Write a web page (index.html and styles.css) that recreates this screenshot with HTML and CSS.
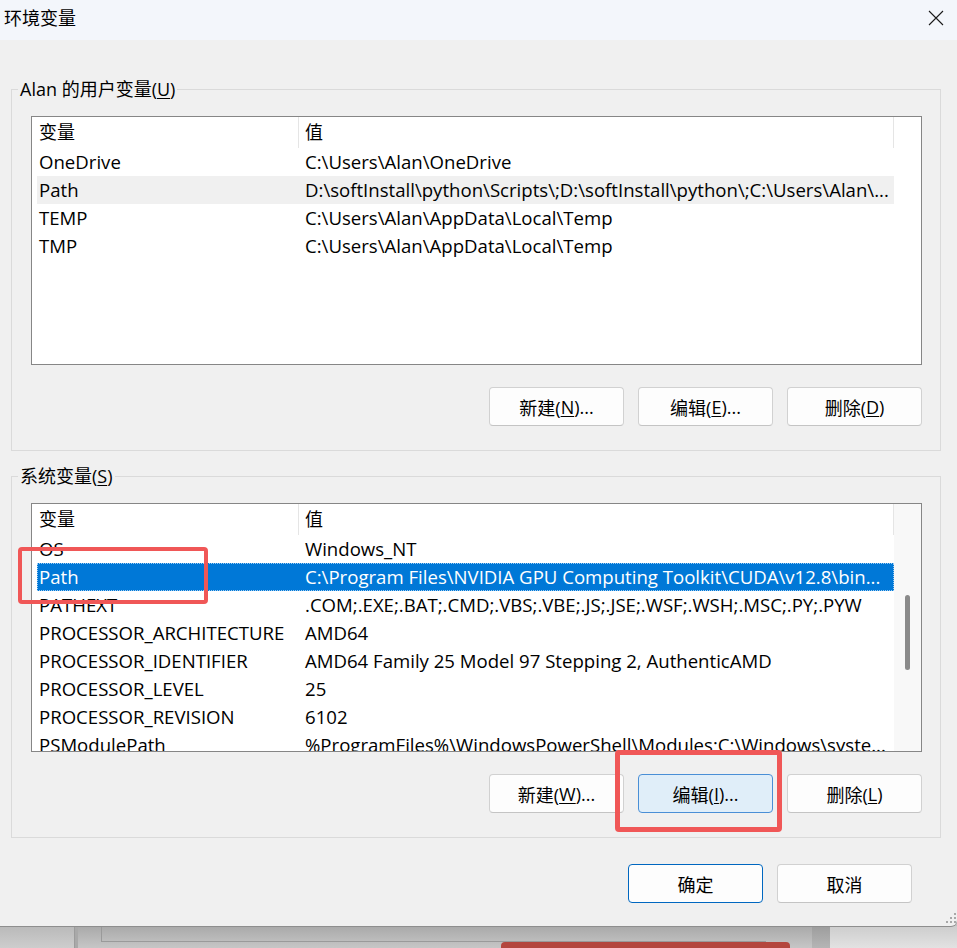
FILE: index.html
```html
<!DOCTYPE html>
<html lang="zh-CN">
<head>
<meta charset="utf-8">
<title>环境变量</title>
<link rel="stylesheet" href="styles.css">
</head>
<body>
<div class="dialog">
  <div class="titlebar">
    <span class="title">环境变量</span>
    <span class="close"><svg width="16" height="16" viewBox="0 0 16 16"><path d="M1 1L15 15M15 1L1 15" stroke="#1a1a1a" stroke-width="1.1" fill="none"/></svg></span>
  </div>
  <div class="content">
    <fieldset class="group">
      <legend>Alan 的用户变量(<u>U</u>)</legend>
      <div class="group-body">
        <div class="list-wrap">
          <div class="list">
            <div class="list-main">
              <div class="row head"><span class="c1">变量</span><span class="c2">值</span></div>
              <div class="row"><span class="c1">OneDrive</span><span class="c2">C:\Users\Alan\OneDrive</span></div>
              <div class="row hover"><span class="c1">Path</span><span class="c2">D:\softInstall\python\Scripts\;D:\softInstall\python\;C:\Users\Alan\...</span></div>
              <div class="row"><span class="c1">TEMP</span><span class="c2">C:\Users\Alan\AppData\Local\Temp</span></div>
              <div class="row"><span class="c1">TMP</span><span class="c2">C:\Users\Alan\AppData\Local\Temp</span></div>
            </div>
            <div class="list-side"></div>
          </div>
        </div>
        <div class="btns">
          <span class="btn">新建(<u>N</u>)...</span>
          <span class="btn">编辑(<u>E</u>)...</span>
          <span class="btn">删除(<u>D</u>)</span>
        </div>
      </div>
    </fieldset>
    <fieldset class="group">
      <legend>系统变量(<u>S</u>)</legend>
      <div class="group-body">
        <div class="list-wrap">
          <div class="list">
            <div class="list-main">
              <div class="row head"><span class="c1">变量</span><span class="c2">值</span></div>
              <div class="row"><span class="c1">OS</span><span class="c2">Windows_NT</span></div>
              <div class="row sel"><span class="c1">Path</span><span class="c2">C:\Program Files\NVIDIA GPU Computing Toolkit\CUDA\v12.8\bin...</span></div>
              <div class="row"><span class="c1">PATHEXT</span><span class="c2">.COM;.EXE;.BAT;.CMD;.VBS;.VBE;.JS;.JSE;.WSF;.WSH;.MSC;.PY;.PYW</span></div>
              <div class="row"><span class="c1">PROCESSOR_ARCHITECTURE</span><span class="c2">AMD64</span></div>
              <div class="row"><span class="c1">PROCESSOR_IDENTIFIER</span><span class="c2">AMD64 Family 25 Model 97 Stepping 2, AuthenticAMD</span></div>
              <div class="row"><span class="c1">PROCESSOR_LEVEL</span><span class="c2">25</span></div>
              <div class="row"><span class="c1">PROCESSOR_REVISION</span><span class="c2">6102</span></div>
              <div class="row"><span class="c1">PSModulePath</span><span class="c2">%ProgramFiles%\WindowsPowerShell\Modules;C:\Windows\syste...</span></div>
            </div>
            <div class="list-side scroll"><span class="thumb"></span></div>
          </div>
          <span class="mark mark-path"></span>
        </div>
        <div class="btns">
          <span class="btn">新建(<u>W</u>)...</span>
          <span class="btn hot">编辑(<u>I</u>)...<span class="mark mark-edit"></span></span>
          <span class="btn">删除(<u>L</u>)</span>
        </div>
      </div>
    </fieldset>
    <div class="footer">
      <span class="btn default">确定</span>
      <span class="btn">取消</span>
    </div>
  </div>
  <svg class="grip" width="10" height="10" viewBox="0 0 10 10"><g fill="#a8a8a8"><rect x="8" y="0" width="2" height="2"/><rect x="4" y="4" width="2" height="2"/><rect x="8" y="4" width="2" height="2"/><rect x="0" y="8" width="2" height="2"/><rect x="4" y="8" width="2" height="2"/><rect x="8" y="8" width="2" height="2"/></g></svg>
</div>
<div class="backdrop">
  <div class="bd-left"></div>
  <div class="bd-line"></div>
  <div class="bd-gap"></div>
  <div class="bd-win">
    <div class="bd-box"></div>
    <div class="bd-red"></div>
  </div>
  <div class="bd-band"></div>
  <div class="bd-right"></div>
</div>
</body>
</html>
```

FILE: styles.css
```css
* { box-sizing: border-box; }
html, body { margin: 0; padding: 0; }
body {
  width: 957px;
  height: 948px;
  overflow: hidden;
  background: #c0c0c0;
  font-family: "Open Sans", "Noto Sans CJK SC", sans-serif;
  font-size: 18px;
  color: #1a1a1a;
}
u { text-underline-offset: 2px; text-decoration-thickness: 1px; }

.dialog {
  position: relative;
  height: 926px;
  background: #f0f0f0;
  box-shadow: 0 1px 0 #8e8e8e;
  border-bottom-right-radius: 6px;
}
.titlebar {
  height: 40px;
  background: #f3f6fb;
  display: flex;
  align-items: center;
  justify-content: space-between;
  padding: 0 13px 4px 4px;
}
.title { font-size: 18px; line-height: 24px; color: #000; }
.close { width: 16px; height: 16px; display: flex; }

.content { padding: 37px 16px 0 11px; }
.group {
  margin: 0;
  padding: 0;
  border: 1px solid #dadada;
  min-width: 0;
}
.group + .group { margin-top: 13px; }
.group legend {
  margin-left: 6px;
  padding: 0 2px;
  line-height: 24px;
  font-size: 18px;
  color: #000;
}
.group-body { padding: 15px 18px 24px 19px; }

.list-wrap { position: relative; }
.list {
  display: flex;
  height: 249px;
  border: 1px solid #868686;
  background: #fff;
  overflow: hidden;
}
.list-main { width: 862px; padding-left: 5px; overflow: hidden; flex: none; }
.list-side { flex: 1; }
.list-side.scroll {
  background: #f8f8f8;
  display: flex;
  justify-content: center;
  padding-top: 91px;
}
.thumb { width: 5px; height: 75px; background: #8a8a8a; border-radius: 3px; }

.row { display: flex; height: 28px; line-height: 28px; white-space: nowrap; color: #000; font-size: 18.6px; }
.row.head { height: 31px; line-height: 31px; font-size: 18px; }
.c1 { width: 262px; padding-left: 2px; overflow: hidden; flex: none; }
.c2 { width: 595px; padding-left: 6px; overflow: hidden; flex: none; }
.head .c1, .head .c2 { border-right: 1px solid #e5e5e5; }
.row.hover { background: #f0f0f0; }
.row.sel {
  background: #0078d7;
  color: #fff;
  outline: 1px dotted #9fcdf3;
  outline-offset: -1px;
}

.btns { display: flex; justify-content: flex-end; gap: 14px; margin-top: 22px; }
.btn {
  position: relative;
  width: 135px;
  height: 39px;
  border: 1px solid #d1d1d1;
  border-bottom-color: #c4c4c4;
  border-radius: 4px;
  background: #fdfdfd;
  display: flex;
  align-items: center;
  justify-content: center;
  font-size: 18px;
  color: #000;
}
.btn.hot { background: #e0eef9; border-color: #4a8fd6; }
.btn.default { border-color: #0067c0; }

.footer { display: flex; justify-content: flex-end; gap: 14px; margin-top: 26px; padding-right: 29px; }

.mark {
  position: absolute;
  border: 4px solid #f05757;
  border-radius: 4px;
  pointer-events: none;
}
.mark-path { left: -13px; top: 44px; width: 190px; height: 57px; }
.mark-edit { left: -24px; top: -25px; width: 167px; height: 82px; border-width: 5px; }

.grip { position: absolute; right: 1px; bottom: 3px; }

.backdrop {
  height: 22px;
  display: flex;
  background: linear-gradient(#a9a9a9, #c6c6c6);
}
.bd-left { width: 74px; background: linear-gradient(#b9b9b9, #cdcdcd); }
.bd-line { width: 4px; background: #a9a9a9; border-left: 1px solid #9c9c9c; }
.bd-gap { width: 23px; }
.bd-win { width: 711px; display: flex; flex-direction: column; }
.bd-box { width: 665px; height: 16px; border-left: 1px solid #9a9a9a; border-bottom: 1px solid #9a9a9a; }
.bd-red { margin-left: 400px; width: 289px; height: 6px; background: #b4463e; border-radius: 4px 4px 0 0; }
.bd-band { width: 18px; background: linear-gradient(#9d9d9d, #b5b5b5); }
.bd-right { flex: 1; background: linear-gradient(#cdcdcd, #e2e2e2); }
```
